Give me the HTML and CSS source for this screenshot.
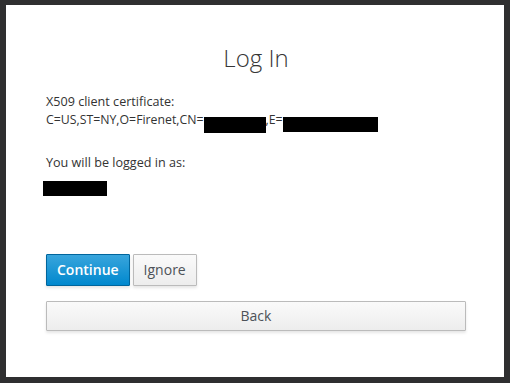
FILE: index.html
```html
<!DOCTYPE html>
<html lang="en">
<head>
  <meta charset="UTF-8">
  <meta name="viewport" content="width=device-width, initial-scale=1.0">
  <title>Log In</title>
  <link rel="stylesheet" href="styles.css">
</head>
<body>
  <div class="panel">
    <h1 class="login-title">Log In</h1>

    <div class="cert-info">
      <div class="cert-label">X509 client certificate:</div>
      <div class="cert-value">C=US,ST=NY,O=Firenet,CN=<span class="redact redact-cn"></span>,E=<span class="redact redact-mail"></span></div>
    </div>

    <div class="user-info">
      <div class="cert-label">You will be logged in as:</div>
      <div class="redact-user"></div>
    </div>

    <div class="actions">
      <button class="btn btn-primary">Continue</button>
      <button class="btn">Ignore</button>
    </div>
    <button class="btn btn-block">Back</button>
  </div>
</body>
</html>
```

FILE: styles.css
```css
body {
  margin: 0;
  background: #2f2f30;
  font-family: "Open Sans", "Liberation Sans", sans-serif;
  color: #333;
}
.panel {
  margin: 5px 6px 6px 6px;
  height: 372px;
  box-sizing: border-box;
  background: #fff;
  padding: 38px 38px 0 40px;
}
.login-title {
  margin: 0;
  font-size: 24px;
  font-weight: 300;
  line-height: 30px;
  text-align: center;
  color: #363636;
}
.cert-info {
  margin-top: 20px;
  font-size: 12px;
  line-height: 18px;
}
.cert-label { font-size: 12.6px; }
.cert-value {
  height: 18px;
  font-size: 12.3px;
}
.redact {
  display: inline-block;
  background: #000;
}
.redact-cn {
  width: 62px;
  height: 16px;
  vertical-align: -9px;
}
.redact-mail {
  width: 95px;
  height: 15px;
  vertical-align: -8px;
}
.user-info {
  margin-top: 25px;
  font-size: 12px;
  line-height: 18px;
}
.redact-user {
  margin: 9px 0 0 -3px;
  width: 64px;
  height: 15px;
  background: #000;
}
.actions {
  display: flex;
  gap: 3px;
  margin-top: 58px;
}
.btn {
  font-family: inherit;
  font-size: 14px;
  line-height: 18px;
  padding: 6px 10px;
  border: 1px solid #bbb;
  border-radius: 1px;
  background: #f1f1f1 linear-gradient(to bottom, #fafafa 0, #ededed 100%);
  color: #4d5258;
  box-shadow: 0 2px 3px rgba(3,3,3,0.1);
  cursor: pointer;
}
.btn-primary {
  font-weight: 600;
  background: #0088ce linear-gradient(to bottom, #39a5dc 0, #0088ce 100%);
  border-color: #00659c;
  color: #fff;
}
.btn-block {
  display: block;
  width: 420px;
  margin-top: 15px;
  padding: 5px 10px;
}
```
